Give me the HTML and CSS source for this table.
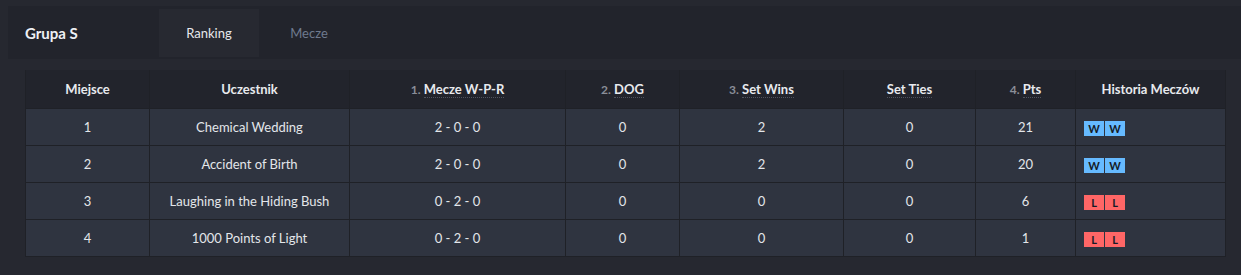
FILE: index.html
```html
<!DOCTYPE html>
<html lang="pl">
<head>
<meta charset="utf-8">
<title>Grupa S</title>
<link rel="stylesheet" href="styles.css">
</head>
<body>
<div class="topbar">
  <div class="group-title">Grupa S</div>
  <div class="tabs">
    <div class="tab active">Ranking</div>
    <div class="tab">Mecze</div>
  </div>
</div>
<div class="table-wrap">
<table class="ranking">
  <colgroup>
    <col class="c1"><col class="c2"><col class="c3"><col class="c4"><col class="c5"><col class="c6"><col class="c7"><col class="c8">
  </colgroup>
  <thead>
    <tr>
      <th><span class="lbl">Miejsce</span></th>
      <th><span class="lbl">Uczestnik</span></th>
      <th><span class="num">1.</span> <span class="lbl dotted">Mecze W-P-R</span></th>
      <th><span class="num">2.</span> <span class="lbl dotted">DOG</span></th>
      <th><span class="num">3.</span> <span class="lbl dotted">Set Wins</span></th>
      <th><span class="lbl dotted">Set Ties</span></th>
      <th><span class="num">4.</span> <span class="lbl dotted">Pts</span></th>
      <th><span class="lbl">Historia Meczów</span></th>
    </tr>
  </thead>
  <tbody>
    <tr><td>1</td><td>Chemical Wedding</td><td>2 - 0 - 0</td><td>0</td><td>2</td><td>0</td><td>21</td><td class="hist"><span class="badge w">W</span><span class="badge w">W</span></td></tr>
    <tr><td>2</td><td>Accident of Birth</td><td>2 - 0 - 0</td><td>0</td><td>2</td><td>0</td><td>20</td><td class="hist"><span class="badge w">W</span><span class="badge w">W</span></td></tr>
    <tr><td>3</td><td>Laughing in the Hiding Bush</td><td>0 - 2 - 0</td><td>0</td><td>0</td><td>0</td><td>6</td><td class="hist"><span class="badge l">L</span><span class="badge l">L</span></td></tr>
    <tr><td>4</td><td>1000 Points of Light</td><td>0 - 2 - 0</td><td>0</td><td>0</td><td>0</td><td>1</td><td class="hist"><span class="badge l">L</span><span class="badge l">L</span></td></tr>
  </tbody>
</table>
</div>
</body>
</html>
```
FILE: styles.css
```css
html, body {
  margin: 0;
  padding: 0;
}
body {
  background: #262830;
  font-family: Lato, "Liberation Sans", sans-serif;
  font-size: 13px;
  color: #e6e8ec;
  height: 275px;
  overflow: hidden;
}
.topbar {
  margin: 6px 0 0 8px;
  height: 53px;
  background: #22242c;
  display: flex;
  align-items: stretch;
}
.group-title {
  width: 151px;
  padding-left: 17px;
  box-sizing: border-box;
  display: flex;
  align-items: center;
  font-weight: bold;
  font-size: 15px;
  color: #eef0f4;
}
.tabs {
  display: flex;
  padding: 3px 0 2px;
}
.tab {
  width: 100px;
  display: flex;
  align-items: center;
  justify-content: center;
  color: #6f7a8e;
  font-size: 13px;
}
.tab.active {
  background: #272931;
  color: #e6e8ec;
}
.table-wrap {
  padding: 11px 0 0 25px;
}
.ranking {
  width: 1200px;
  border-collapse: collapse;
  table-layout: fixed;
}
.c1 { width: 124px; }
.c2 { width: 200px; }
.c3 { width: 216px; }
.c4 { width: 114px; }
.c5 { width: 164px; }
.c6 { width: 132px; }
.c7 { width: 100px; }
.c8 { width: 150px; }
.ranking th {
  background: #22242c;
  height: 38px;
  padding: 0;
  font-weight: bold;
  font-size: 13px;
  color: #e8eaee;
  text-align: center;
  border: 1px solid #1f2127;
  border-top: none;
}
.ranking th .num {
  color: #8a8e98;
  font-weight: bold;
  font-size: 12px;
}
.ranking th .dotted {
  border-bottom: 1px dotted #50545e;
}
.ranking td {
  background: #2f3440;
  height: 36px;
  padding: 0;
  text-align: center;
  border: 1px solid #1f2127;
  color: #e3e6ea;
}
.ranking td.hist {
  text-align: left;
  padding-left: 8px;
}
.badge {
  display: inline-block;
  width: 20px;
  height: 15px;
  line-height: 15px;
  margin-right: 1px;
  text-align: center;
  font-size: 11px;
  font-weight: bold;
  color: #151a26;
  vertical-align: middle;
}
.badge.w { background: #66baff; }
.badge.l { background: #ff6666; }
```
